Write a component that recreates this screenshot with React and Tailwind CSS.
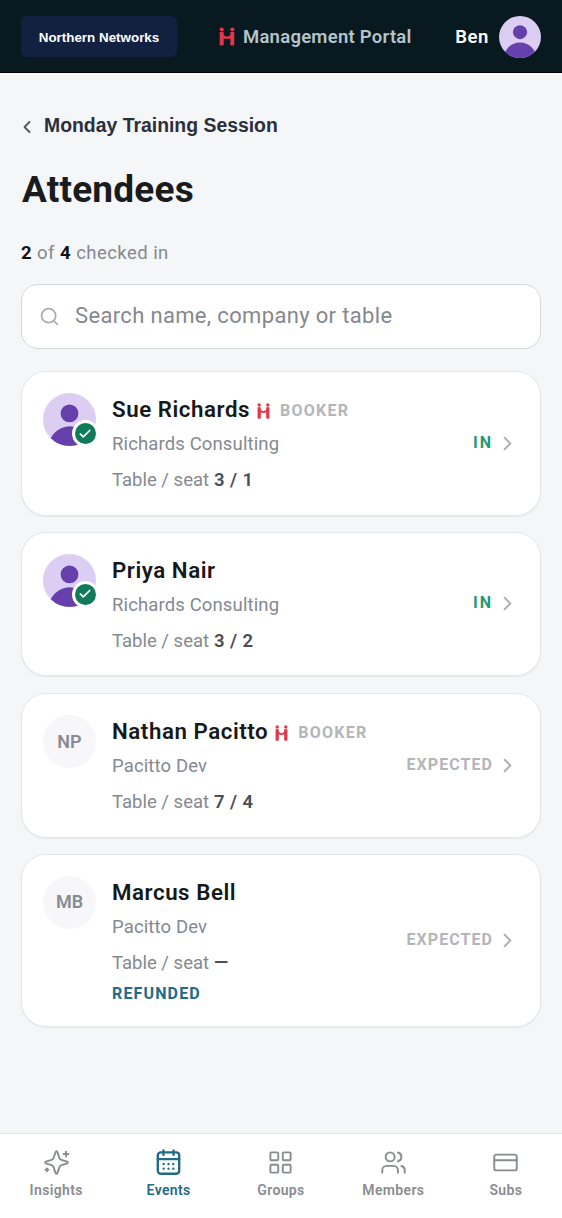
import React from "react";
import { ChevronLeft, ChevronRight, Search, Check, LayoutGrid, Users, CreditCard } from "lucide-react";

function HMark({ className }) {
  return (
    <svg viewBox="0 0 16 20" preserveAspectRatio="none" className={className} fill="#e0384a">
      <circle cx="2.7" cy="2.5" r="2.1" />
      <circle cx="13.3" cy="2.5" r="2.1" />
      <path d="M.7 5.600Q2.700 4.200 4.700 5.600V8.600L8 10.200L11.300 8.600V5.600Q13.300 4.200 15.300 5.600V18.400Q15.300 19.600 14.200 19.600H12.400Q11.300 19.600 11.300 18.400V12L8 12.500L4.700 12V18.400Q4.700 19.600 3.600 19.600H1.800Q.7 19.600 .7 18.400Z" />
    </svg>
  );
}

function Avatar({ className }) {
  return (
    <svg viewBox="0 0 52 52" className={"rounded-full " + className}>
      <rect width="52" height="52" fill="#dccdf2" />
      <circle cx="26" cy="20" r="8.7" fill="#6540ad" />
      <circle cx="26" cy="53" r="20.3" fill="#6540ad" />
    </svg>
  );
}

function Sparkles({ className }) {
  return (
    <svg viewBox="0 0 24 24" className={className} fill="none" stroke="currentColor" strokeWidth="1.7" strokeLinecap="round" strokeLinejoin="round">
      <path d="M12 1.900c.4 0 .6.300.8.800l1.700 5.100c.4 1 .9 1.500 1.900 1.900l5.100 1.600c.8.300.8 1.100 0 1.400l-5.100 1.700c-1 .300-1.500.9-1.900 1.900l-1.700 5.100c-.3.900-1.300.900-1.600 0l-1.700-5.100c-.4-1-.9-1.500-1.900-1.900L2.500 12.700c-.8-.300-.8-1.100 0-1.400l5.100-1.600c1-.400 1.500-.9 1.900-1.900l1.700-5.100c.2-.500.4-.800.8-.800Z" />
      <path d="M20.500 2.300v4.400M18.300 4.500h4.400M3.500 17.200v2.600M2.200 18.500h2.600" />
    </svg>
  );
}

function Calendar({ className }) {
  return (
    <svg viewBox="0 0 24 24" className={className} fill="none" stroke="currentColor" strokeWidth="2.1" strokeLinecap="round" strokeLinejoin="round">
      <rect x="2.5" y="3" width="19" height="19" rx="2.600" />
      <path d="M7.500 1.200v4M16.500 1.200v4M2.500 9h19" />
      <path d="M7.700 13.300h.01M12 13.300h.01M16.300 13.300h.01M7.700 17.500h.01M12 17.500h.01M16.300 17.500h.01" />
    </svg>
  );
}

const attendees = [
  { name: "Sue Richards", company: "Richards Consulting", seat: "3 / 1", booker: true, checkedIn: true, size: "h-[144.500px]", gap: "mb-4" },
  { name: "Priya Nair", company: "Richards Consulting", seat: "3 / 2", checkedIn: true, size: "h-[144.500px]", gap: "mb-[17px]" },
  { name: "Nathan Pacitto", initials: "NP", company: "Pacitto Dev", seat: "7 / 4", booker: true, size: "h-[144.500px]", gap: "mb-4" },
  { name: "Marcus Bell", initials: "MB", company: "Pacitto Dev", seat: "—", refunded: true, size: "h-[173px]", gap: "" },
];

function AttendeeCard({ a }) {
  return (
    <li className={"flex rounded-[25px] border border-[#e4e7e9] bg-white pr-[25px] pl-[21px] shadow-[0_1px_2px_rgba(20,30,40,0.06)] " + a.size + " " + a.gap}>
      <div className="relative mt-[21px] size-[53px] shrink-0">
        {a.checkedIn ? (
          <>
            <Avatar className="size-[53px]" />
            <span className="absolute -right-[2.500px] -bottom-[1px] flex size-[27px] items-center justify-center rounded-full border-3 border-white bg-[#117a5b]">
              <Check className="size-[14px] text-white" strokeWidth={3} />
            </span>
          </>
        ) : (
          <div className="flex size-[53px] items-center justify-center rounded-full bg-[#f7f7fa] pb-[1px] text-[18px] font-semibold text-[#888b92]">{a.initials}</div>
        )}
      </div>
      <div className="ml-4 pt-[22px]">
        <div className="flex h-8 items-center text-[22.300px] font-semibold tracking-[0.550px] whitespace-nowrap text-[#16181a]">
          {a.name}
          {a.booker && (
            <>
              <HMark className="mt-[2px] ml-[7px] h-[16px] w-[13px]" />
              <span className="ml-[10px] pt-px text-base font-bold tracking-[1.250px] text-[#b3b6b9]">BOOKER</span>
            </>
          )}
        </div>
        <div className="mt-[4px] flex h-[30px] items-center text-[18.500px] tracking-[0.130px] text-[#85898f]">{a.company}</div>
        <div className="mt-[6px] flex h-[30px] items-center gap-[5px] text-[18.500px] text-[#85898f]">
          Table / seat <b className="font-semibold tracking-[0.400px] text-[#494e55]">{a.seat}</b>
        </div>
        {a.refunded && <div className="-mt-px flex h-8 items-center text-base font-bold tracking-[1.150px] text-[#216b8a]">REFUNDED</div>}
      </div>
      <div className={"mt-[-1px] ml-auto flex items-center text-base font-bold " + (a.checkedIn ? "tracking-[2px] text-[#24986f]" : "tracking-[1.050px] text-[#b3b6b9]")}>
        {a.checkedIn ? "IN" : "EXPECTED"}
        <ChevronRight className="mt-[1px] -mr-[4px] ml-[3px] size-[23px] text-[#adb0b3]" strokeWidth={2} />
      </div>
    </li>
  );
}

const tabs = [
  { label: "Insights", Icon: Sparkles },
  { label: "Events", Icon: Calendar, active: true },
  { label: "Groups", Icon: LayoutGrid },
  { label: "Members", Icon: Users },
  { label: "Subs", Icon: CreditCard },
];

export default function App() {
  return (
    <div className="flex h-[1218px] w-[562px] flex-col bg-[#f4f6f8] font-['Roboto','Liberation_Sans',sans-serif]">
      <header className="flex h-[73px] shrink-0 items-center border-b border-black bg-[#08191f] px-[21px] pt-[2px]">
        <div className="mb-px flex h-[41px] w-[156px] items-center justify-center rounded-[6px] bg-[#11213f] pt-[3px] font-['Liberation_Sans',sans-serif] text-[13.400px] font-bold text-white">Northern Networks</div>
        <HMark className="mb-px ml-[42px] h-[19px] w-4" />
        <span className="mt-[2px] ml-[8px] text-[18.500px] font-semibold tracking-[0.250px] whitespace-nowrap text-[#b5c3ca]">Management Portal</span>
        <span className="mt-[2px] ml-auto text-[18.500px] font-semibold tracking-[0.600px] text-white">Ben</span>
        <Avatar className="ml-[10px] size-[42px]" />
      </header>
      <main className="flex grow flex-col px-[21px]">
        <div className="mt-[39px] flex h-7 items-center font-['Liberation_Sans',sans-serif] text-[19.400px] font-bold text-[#2b2f3b]">
          <ChevronLeft className="mt-[2px] -ml-[4px] mr-[7px] size-[20px] text-[#50555c]" strokeWidth={2.200} />
          Monday Training Session
        </div>
        <h1 className="mt-[26px] h-12 pl-px text-[37px] leading-12 font-bold tracking-[0.200px] text-[#191b1d]">Attendees</h1>
        <p className="mt-[24px] h-[30px] text-[18.500px] leading-[30px] tracking-[0.450px] text-[#85898f]">
          <b className="font-bold text-[#111315]">2</b> of <b className="font-bold text-[#111315]">4</b> checked in
        </p>
        <div className="mt-[16px] flex h-[65px] shrink-0 items-center rounded-[17px] border border-[#d5dad9] bg-white pl-[17px] text-[22px] tracking-[0.340px] text-[#85888b]">
          <Search className="mr-[15px] size-[21px] text-[#aaaeb1]" strokeWidth={2} />
          <span className="-mt-[2px]">Search name, company or table</span>
        </div>
        <ul className="mt-[22px]">
          {attendees.map((a) => <AttendeeCard key={a.name} a={a} />)}
        </ul>
      </main>
      <nav className="grid h-[85px] shrink-0 grid-cols-5 border-t border-[#e2e5e7] bg-white">
        {tabs.map(({ label, Icon, active }) => (
          <div key={label} className={"flex flex-col items-center pt-[15px] text-sm font-semibold tracking-[0.350px] " + (active ? "text-[#216b87]" : "text-[#898c90]")}>
            <Icon className="size-[27px]" strokeWidth={1.700} />
            <span className="mt-[4px]">{label}</span>
          </div>
        ))}
      </nav>
    </div>
  );
}
